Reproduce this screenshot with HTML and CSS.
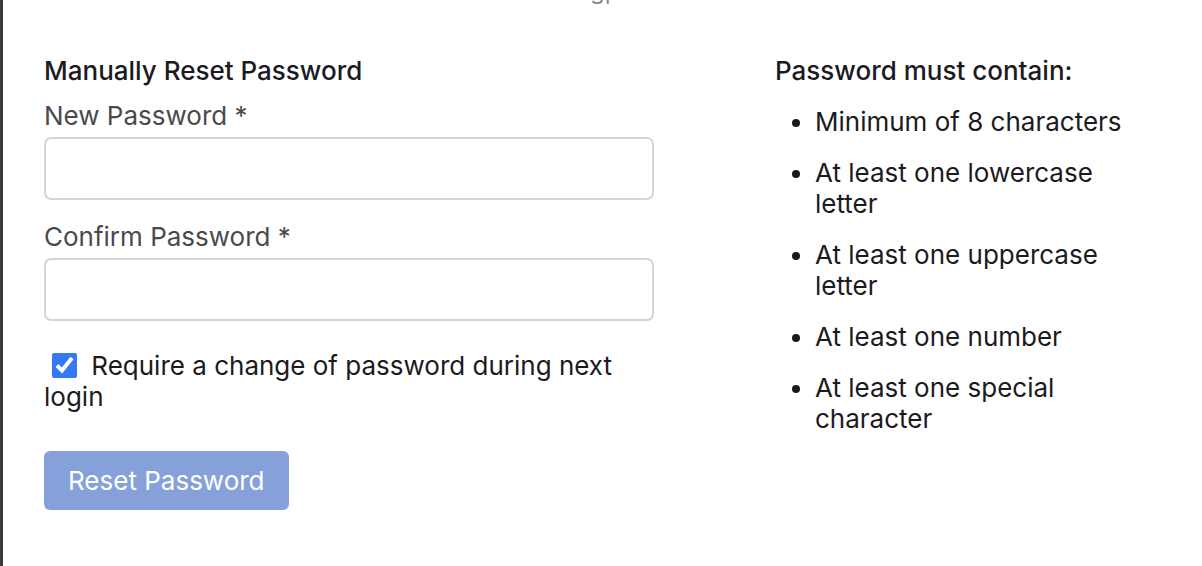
FILE: index.html
```html
<!DOCTYPE html>
<html>
<head>
<meta charset="utf-8">
<link rel="stylesheet" href="styles.css">
</head>
<body>
<div class="frame">
  <div class="clip"><span class="cut">gp</span></div>
  <div class="content">
    <section class="form">
      <h2 class="title">Manually Reset Password</h2>
      <label class="label" for="np">New Password *</label>
      <input class="input" id="np" type="password">
      <label class="label label-2" for="cp">Confirm Password *</label>
      <input class="input" id="cp" type="password">
      <label class="check">
        <input type="checkbox" class="box" checked>
        Require a change of password during next login
      </label>
      <button class="btn" disabled>Reset Password</button>
    </section>
    <section class="rules">
      <h2 class="title">Password must contain:</h2>
      <ul class="list">
        <li>Minimum of 8 characters</li>
        <li>At least one lowercase letter</li>
        <li>At least one uppercase letter</li>
        <li>At least one number</li>
        <li>At least one special character</li>
      </ul>
    </section>
  </div>
</div>
</body>
</html>
```
FILE: styles.css
```css
html, body {
  margin: 0;
  padding: 0;
  background: #ffffff;
}
body {
  font-family: Inter, "Noto Sans", sans-serif;
  font-size: 26px;
  line-height: 31px;
  color: #1b1b1f;
}
.frame {
  border-left: 3px solid #3b3b3b;
  min-height: 566px;
  box-sizing: border-box;
}
.clip {
  height: 6px;
  overflow: hidden;
  position: relative;
}
.cut {
  position: absolute;
  left: 587px;
  top: -25px;
  font-size: 24px;
  line-height: 31px;
  color: #8a8a8a;
}
.content {
  display: grid;
  grid-template-columns: 610px 370px;
  column-gap: 121px;
  padding: 49px 0 0 41px;
}
.title {
  margin: 0;
  font-size: 26px;
  font-weight: 500;
  line-height: 31px;
  color: #1b1b1f;
}
.form {
  display: flex;
  flex-direction: column;
  align-items: flex-start;
}
.label {
  margin-top: 14px;
  color: #4a4a4e;
}
.label-2 {
  margin-top: 21px;
}
.input {
  margin-top: 6px;
  width: 610px;
  height: 63px;
  box-sizing: border-box;
  border: 2px solid #d4d4d4;
  border-radius: 7px;
  background: #fff;
  font: inherit;
}
.check {
  margin-top: 29px;
  display: block;
  color: #1b1b1f;
  width: 610px;
}
.box {
  width: 25px;
  height: 25px;
  margin: 0 7px 0 8px;
  vertical-align: -3px;
  accent-color: #3478f6;
}
.btn {
  margin-top: 39px;
  height: 59px;
  padding: 0 24px;
  border: none;
  border-radius: 6px;
  background: #86a1da;
  color: #ffffff;
  font: inherit;
  font-size: 26px;
}
.list {
  margin: 20px 0 0;
  padding-left: 40px;
}
.list li {
  margin-bottom: 20px;
}
```
